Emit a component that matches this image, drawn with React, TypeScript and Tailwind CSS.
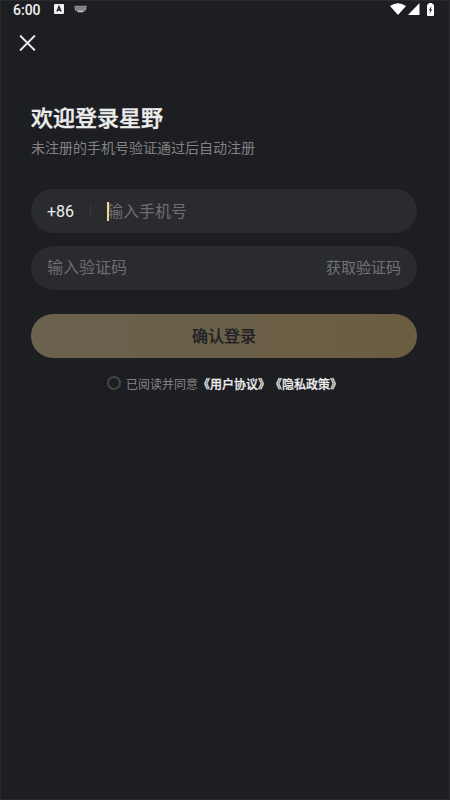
import React from "react";

const StatusBar = () => (
  <header className="flex h-4 items-center pr-[15px] pl-3">
    <span className="pt-px font-['Roboto'] text-sm leading-none font-medium text-[#f0f0f1]">
      6:00
    </span>
    <svg width="10" height="10" viewBox="0 0 10 10" className="ml-[13px]">
      <rect width="10" height="10" rx="1" fill="#f1f1f2" />
      <path
        d="M2.9 7.6 5 2.5l2.1 5.1M3.6 6h2.8"
        fill="none"
        stroke="#1d1e22"
        strokeWidth="1.3"
      />
    </svg>
    <svg width="13" height="8" viewBox="0 0 13 8" className="ml-[10px]">
      <path d="M.3.8h12.4l-.6 4q-.2.9-1 .9H1.900q-.8 0-1-.9Z" fill="#98989b" />
      <path d="M3.3 5.700h6.4v.9q0 .7-.7.7H4q-.7 0-.7-.7Z" fill="#c9c9cb" />
      <path
        d="M1.3 2.2h10.4M2.3 3.900h8.400"
        stroke="#3a3b3f"
        strokeWidth="0.8"
        strokeDasharray="1 1"
      />
    </svg>
    <div className="ml-auto flex items-center">
      <svg width="16" height="12" viewBox="0 0 16 13" preserveAspectRatio="none">
        <path d="M0 3.2Q8-2.8 16 3.2L8 13Z" fill="#fff" />
      </svg>
      <svg width="12" height="12" viewBox="0 0 12 12" className="ml-[2px]">
        <path d="M11.5 0v12H0Z" fill="#fff" />
      </svg>
      <svg
        width="7"
        height="13"
        viewBox="0 0 8 14"
        preserveAspectRatio="none"
        className="ml-[7px]"
      >
        <path
          d="M1.9 0h4.2v1.3H7q1 0 1 1V13q0 1-1 1H1q-1 0-1-1V2.3q0-1 1-1h.9Z"
          fill="#fff"
        />
        <path d="M5.2 3.3 2 7.8h1.9L2.8 11.6 6 6.9H4.3Z" fill="#1d1e22" />
      </svg>
    </div>
  </header>
);

const App = () => {
  return (
    <main className="flex h-[800px] w-[450px] flex-col border border-[#292a2f] bg-[#1d1e22] font-['Noto_Sans_CJK_SC','Liberation_Sans',sans-serif]">
      <StatusBar />
      <button aria-label="关闭" className="mt-[18px] ml-[18px] size-4">
        <svg viewBox="0 0 16 16" className="h-4 w-[17px]">
          <path
            d="M.6.6l14.8 14.8M15.4.6.6 15.4"
            stroke="#ececed"
            strokeWidth="2"
          />
        </svg>
      </button>

      <section className="mt-[49px] flex flex-col pr-8 pl-[30px]">
        <h1 className="text-[22px] leading-8 font-medium text-[#ededee] [-webkit-text-stroke:0.4px]">
          欢迎登录星野
        </h1>
        <p className="mt-[5px] text-sm leading-5 text-[#828285]">
          未注册的手机号验证通过后自动注册
        </p>

        <div className="mt-8 flex h-11 items-center rounded-full bg-[#2a2b2e] px-4">
          <span className="w-7 pt-px font-['Roboto'] text-base text-[#f0f0f1]">
            +86
          </span>
          <span className="ml-[15px] h-[13px] w-px bg-[#3b3c3f]" />
          <span className="z-10 ml-4 h-[19px] w-[2px] bg-[#f5d590]" />
          <span className="-ml-[2px] pb-0.5 text-base leading-6 text-[#6e6e71]">
            输入手机号
          </span>
        </div>

        <div className="mt-[12.5px] flex h-11 items-center justify-between rounded-full bg-[#2a2b2e] px-4 pb-0.5">
          <span className="pb-px text-base leading-6 text-[#6e6e71]">
            输入验证码
          </span>
          <span className="text-[15px] leading-6 text-[#727275]">
            获取验证码
          </span>
        </div>

        <button className="mt-[24.5px] h-11 rounded-full bg-linear-to-r from-[#6b624f] to-[#6a5d40] pb-0.5 text-base font-medium text-[#212125] [-webkit-text-stroke:0.2px]">
          确认登录
        </button>

        <div className="mt-4 flex items-center justify-center pl-px text-xs leading-5 whitespace-nowrap">
          <span className="-mt-[3px] mr-[5px] size-[14px] rounded-full border-2 border-[#434447]" />
          <span className="text-[#858588]">已阅读并同意</span>
          <span className="font-medium text-[#ededee] [-webkit-text-stroke:0.25px]">
            《用户协议》
          </span>
          <span className="font-medium text-[#ededee] [-webkit-text-stroke:0.25px]">
            《隐私政策》
          </span>
        </div>
      </section>
    </main>
  );
};

export default App;
